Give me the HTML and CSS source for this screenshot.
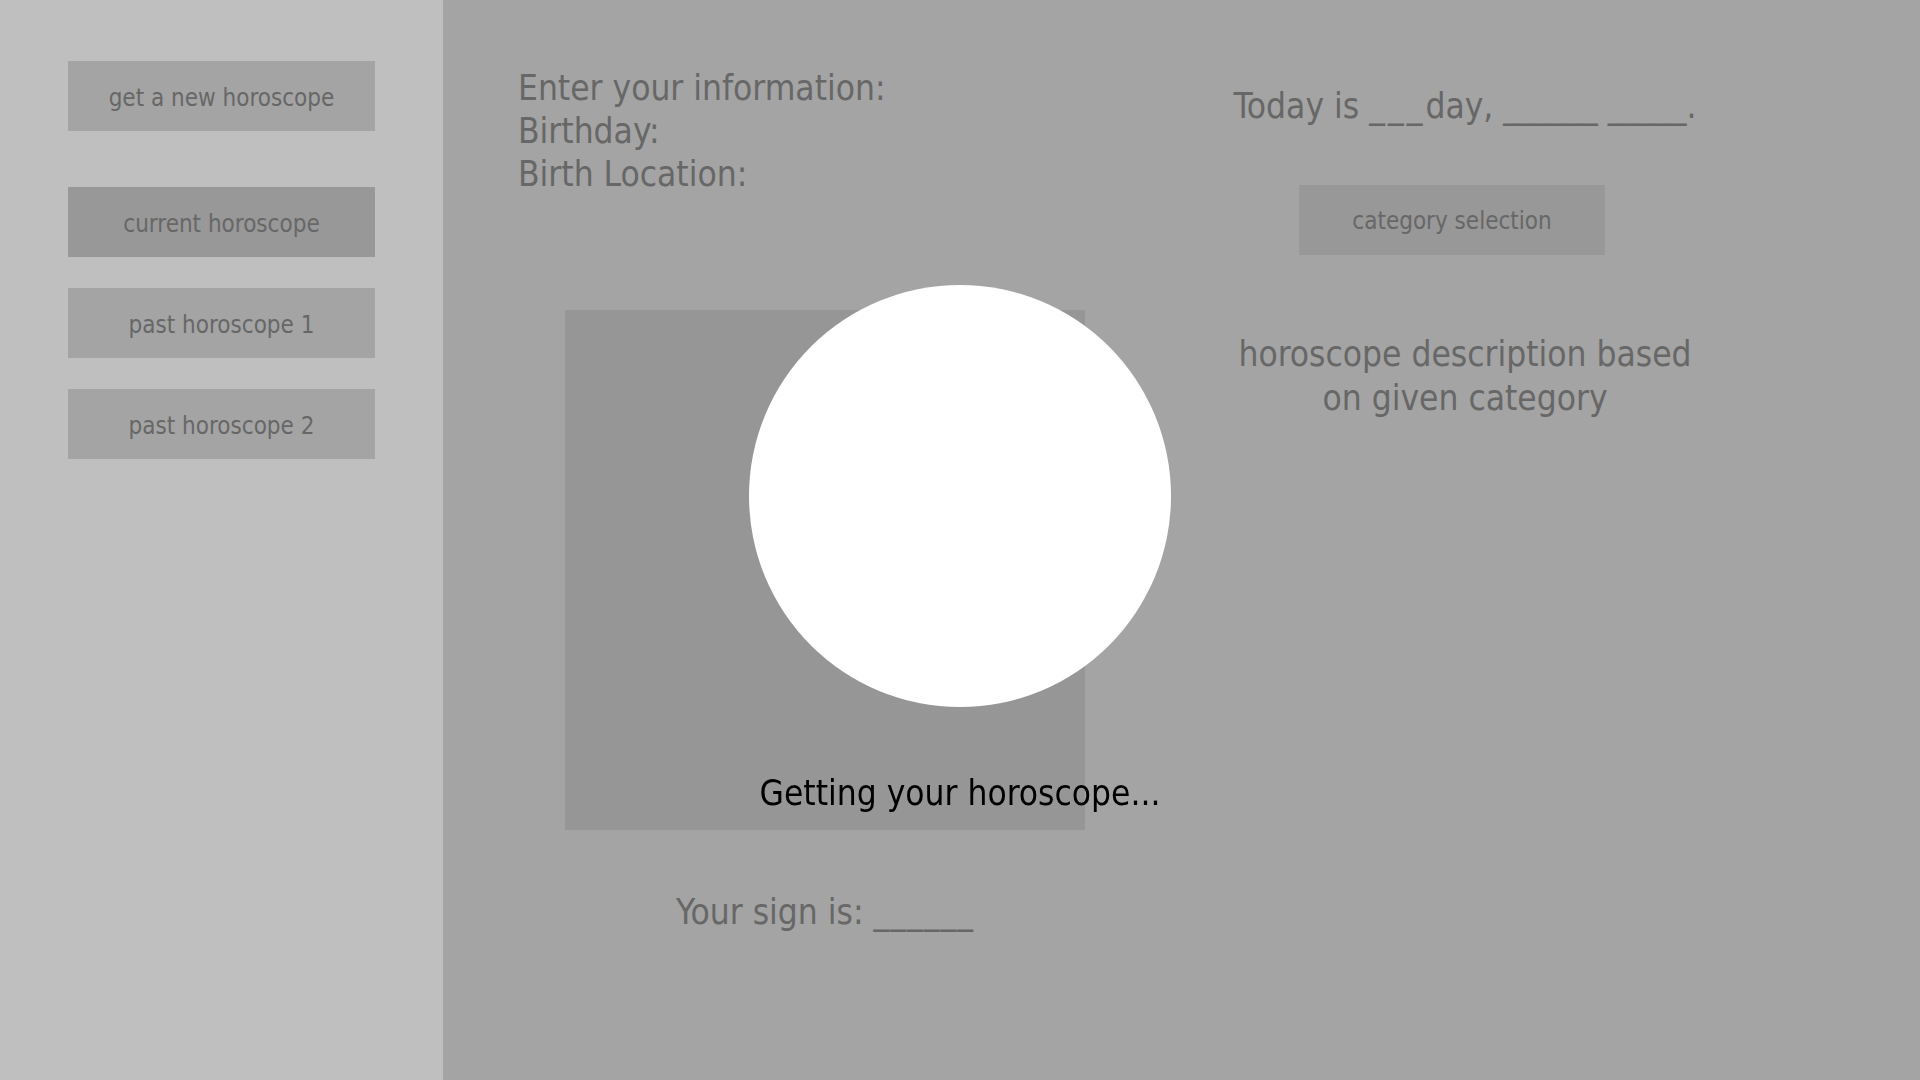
FILE: index.html
```html
<!DOCTYPE html>
<html lang="en">
<head>
<meta charset="utf-8">
<title>Horoscope</title>
<link rel="stylesheet" href="styles.css">
</head>
<body>
<div class="app">
  <aside class="sidebar">
    <div class="nav-btn nav-btn--first">get a new horoscope</div>
    <div class="nav-btn nav-btn--active nav-btn--section">current horoscope</div>
    <div class="nav-btn">past horoscope 1</div>
    <div class="nav-btn">past horoscope 2</div>
  </aside>
  <main class="main">
    <section class="left-col">
      <div class="info">
        <div>Enter your information:</div>
        <div>Birthday:</div>
        <div>Birth Location:</div>
      </div>
      <div class="picture-wrap">
        <div class="picture"></div>
        <div class="sign">Your sign is: <span class="blank">______</span></div>
      </div>
    </section>
    <section class="right-col">
      <div class="today">Today is <span class="blank blank--day">___</span>day, ______ _____.</div>
      <div class="category-btn">category selection</div>
      <div class="description">horoscope description based<br>on given category</div>
    </section>
  </main>
</div>
<div class="overlay">
  <div class="loader-circle"></div>
  <div class="loader-text">Getting your horoscope...</div>
</div>
</body>
</html>
```

FILE: styles.css
```css
html, body {
  margin: 0;
  padding: 0;
  height: 100%;
}

body {
  font-family: "DejaVu Sans", Tahoma, Verdana, sans-serif;
  font-stretch: condensed;
  color: #676767;
  overflow: hidden;
}

.app {
  display: flex;
  height: 100vh;
}

.sidebar {
  width: 443px;
  flex: none;
  background: #bfbfbf;
  box-sizing: border-box;
  padding: 61px 0 0 68px;
  display: flex;
  flex-direction: column;
  gap: 31px;
}

.nav-btn {
  width: 307px;
  height: 70px;
  box-sizing: border-box;
  padding-top: 3px;
  background: #a4a4a4;
  display: flex;
  align-items: center;
  justify-content: center;
  font-size: 24px;
  line-height: 1;
}

.nav-btn--section {
  margin-top: 25px;
}

.nav-btn--active {
  background: #989898;
}

.main {
  flex: 1;
  background: #a4a4a4;
  display: flex;
}

.left-col {
  width: 717px;
  flex: none;
  box-sizing: border-box;
  padding: 67px 0 0 75px;
}

.info {
  font-size: 35px;
  line-height: 43px;
}

.picture-wrap {
  margin: 114px 0 0 47px;
  width: 520px;
}

.picture {
  width: 520px;
  height: 520px;
  background: #969696;
}

.sign {
  margin-top: 61px;
  text-align: center;
  font-size: 35px;
  line-height: 43px;
}

.sign .blank {
  letter-spacing: 1px;
}

.right-col {
  width: 610px;
  flex: none;
  box-sizing: border-box;
  padding-top: 85px;
  display: flex;
  flex-direction: column;
  align-items: center;
}

.today {
  font-size: 35px;
  line-height: 43px;
  white-space: nowrap;
}

.blank--day {
  letter-spacing: 3px;
}

.category-btn {
  margin: 57px 26px 0 0;
  width: 306px;
  height: 70px;
  box-sizing: border-box;
  padding-top: 2px;
  background: #989898;
  display: flex;
  align-items: center;
  justify-content: center;
  font-size: 24px;
  line-height: 1;
}

.description {
  margin-top: 77px;
  text-align: center;
  font-size: 35px;
  line-height: 44px;
}

.overlay {
  position: fixed;
  inset: 0;
  display: flex;
  flex-direction: column;
  align-items: center;
  padding-top: 285px;
  pointer-events: none;
}

.loader-circle {
  width: 422px;
  height: 422px;
  border-radius: 50%;
  background: #ffffff;
}

.loader-text {
  margin-top: 64px;
  font-size: 35px;
  line-height: 44px;
  color: #000000;
  white-space: nowrap;
}
```
